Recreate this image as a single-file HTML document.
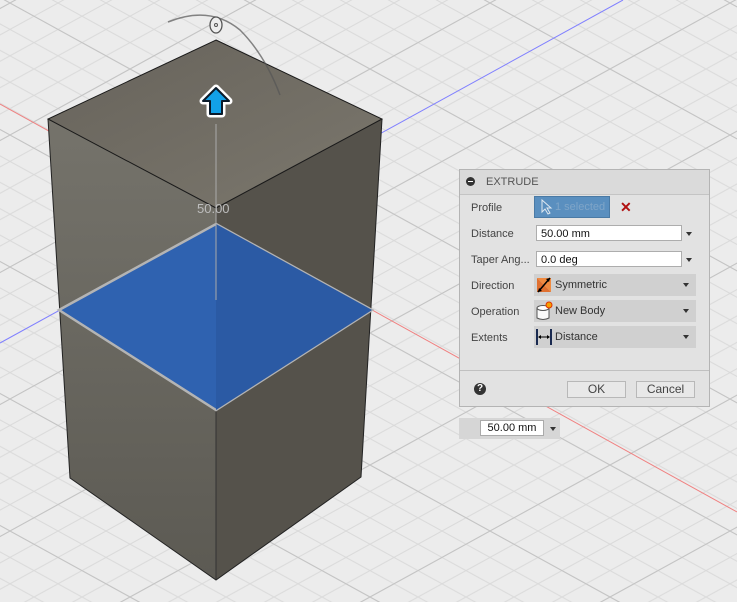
<!DOCTYPE html>
<html><head><meta charset="utf-8"><style>
html,body{margin:0;padding:0;width:737px;height:602px;overflow:hidden;background:#ececec;font-family:"Liberation Sans",sans-serif;}
svg.bg{position:absolute;left:0;top:0}
.panel{position:absolute;left:459px;top:169px;width:249px;height:236px;background:#e2e2e2;border:1px solid #b4b4b4;font-size:11px;color:#333}
.hdr{height:24px;border-bottom:1px solid #c4c4c4;background:#dadada;position:relative}
.hdr .min{position:absolute;left:6px;top:7px;width:9px;height:9px;border-radius:50%;background:#333}
.hdr .min:after{content:"";position:absolute;left:2px;top:4px;width:5px;height:1px;background:#fff}
.hdr span{position:absolute;left:26px;top:6px;color:#555;font-size:11px}
.lbl{position:absolute;left:11px;font-size:11px;color:#444}
.inp{position:absolute;left:76px;width:146px;height:16px;background:#fff;border:1px solid #adadad;font-size:11px;line-height:16px;padding-left:4px;box-sizing:border-box;color:#111}
.arr{position:absolute;width:0;height:0;border-left:3px solid transparent;border-right:3px solid transparent;border-top:4px solid #333}
.dd{position:absolute;left:74px;width:162px;height:22px;background:#d0d0d0;font-size:11px;line-height:22px;color:#333}
.dd span{position:absolute;left:21px;top:0}
.dd .arr{left:149px;top:9px}
.foot{position:absolute;left:0;top:200px;width:249px;height:1px;background:#c0c0c0}
.btn{position:absolute;top:211px;height:15px;border:1px solid #b8b8b8;background:#e8e8e8;font-size:12px;text-align:center;line-height:15px;color:#444}
</style></head><body>
<svg class="bg" width="737" height="602" viewBox="0 0 737 602">
<defs>
<pattern id="g" width="48" height="26.4" patternUnits="userSpaceOnUse" x="10" y="3">
<path d="M0 0L48 26.4M0 26.4L48 0" stroke="#dadada" stroke-width="1" fill="none"/>
</pattern>
<pattern id="g2" width="240" height="132" patternUnits="userSpaceOnUse" x="10" y="3">
<path d="M0 0L240 132M0 132L240 0" stroke="#c4c4c4" stroke-width="1" fill="none"/>
</pattern>
<linearGradient id="top" x1="0" y1="0" x2="1" y2="1"><stop offset="0" stop-color="#67635b"/><stop offset="1" stop-color="#7b776d"/></linearGradient>
<linearGradient id="lf" x1="0" y1="0" x2="0" y2="1"><stop offset="0" stop-color="#75736b"/><stop offset="1" stop-color="#5c5a53"/></linearGradient>
</defs>
<rect width="737" height="602" fill="#ececec"/>
<rect width="737" height="602" fill="url(#g)"/>
<rect width="737" height="602" fill="url(#g2)"/>
<line x1="0" y1="104" x2="737" y2="512" stroke="#f08080" stroke-width="1"/>
<line x1="0" y1="343" x2="623" y2="0" stroke="#8080ff" stroke-width="1"/>
<polygon points="48,119 216,208 216,580 70,478" fill="url(#lf)"/>
<polygon points="216,208 382,119 361,477 216,580" fill="#55524b"/>
<polygon points="216,40 382,119 216,208 48,119" fill="url(#top)" stroke="#1a1a1a" stroke-width="1"/>
<polyline points="48,119 70,478 216,580 361,477 382,119" fill="none" stroke="#222" stroke-width="1"/>
<line x1="216" y1="410" x2="216" y2="580" stroke="#333" stroke-width="1"/>
<polygon points="216,224 372,310 216,410 59,310" fill="#2f62b0" stroke="#b4b4b4" stroke-width="2.5"/>
<polygon points="216,224 372,310 216,410" fill="#2b5aa4"/>
<line x1="216" y1="124" x2="216" y2="300" stroke="#aaa" stroke-width="1"/>
<text x="197" y="213" font-size="13" fill="#bdbdbd" font-family="Liberation Sans">50.00</text>
<path d="M168 22 Q210 5 240 30 Q265 55 280 95" stroke="#555" stroke-width="1.5" fill="none" opacity="0.7"/>
<ellipse cx="216" cy="25" rx="6" ry="8" fill="#eee" stroke="#555" stroke-width="1.3"/>
<circle cx="216" cy="25" r="1.5" fill="none" stroke="#555"/>
<path d="M216 88 L229 101 L222 101 L222 114 L210 114 L210 101 L203 101 Z" fill="none" stroke="#fff" stroke-width="7" stroke-linejoin="round"/>
<path d="M216 88 L229 101 L222 101 L222 114 L210 114 L210 101 L203 101 Z" fill="#12a1e8" stroke="#0a1a2a" stroke-width="2" stroke-linejoin="round"/>
</svg>

<div class="panel">
<div class="hdr"><div class="min"></div><span>EXTRUDE</span></div>
<div class="lbl" style="top:32px">Profile</div>
<div style="position:absolute;left:74px;top:26px;width:76px;height:22px;background:#5a8fbf;border:1px solid #4a7aa5;box-sizing:border-box;color:#7fa5c8;font-size:11px;line-height:20px">
<svg width="14" height="16" style="position:absolute;left:5px;top:2px"><path d="M2 1 L2 13 L5 10 L8 15 L10 14 L7 9 L11 9 Z" fill="#5a8fbf" stroke="#dfe8f0" stroke-width="1"/></svg>
<span style="position:absolute;left:20px;top:0">1 selected</span></div>
<div style="position:absolute;left:160px;top:29px;color:#b01010;font-size:14px;font-weight:bold">✕</div>
<div class="lbl" style="top:58px">Distance</div>
<div class="inp" style="top:55px">50.00 mm</div><div class="arr" style="left:226px;top:62px"></div>
<div class="lbl" style="top:84px">Taper Ang...</div>
<div class="inp" style="top:81px">0.0 deg</div><div class="arr" style="left:226px;top:88px"></div>
<div class="lbl" style="top:110px">Direction</div>
<div class="dd" style="top:104px"><svg width="18" height="20" style="position:absolute;left:1px;top:1px"><polygon points="2,3 16,17 16,3" fill="#f08a40"/><polygon points="2,3 2,17 16,17" fill="#e07030"/><line x1="3" y1="17" x2="15" y2="3" stroke="#000" stroke-width="1.5"/><path d="M15 3 L11 4 L14 7Z M3 17 L7 16 L4 13Z" fill="#000"/></svg><span>Symmetric</span><div class="arr"></div></div>
<div class="lbl" style="top:136px">Operation</div>
<div class="dd" style="top:130px"><svg width="18" height="20" style="position:absolute;left:1px;top:1px"><path d="M2 7 L2 17 Q8 20 14 17 L14 7" fill="#fafafa" stroke="#555"/><ellipse cx="8" cy="7" rx="6" ry="2.5" fill="#fff" stroke="#555"/><circle cx="14" cy="4" r="3" fill="#f5a000" stroke="#e03000"/></svg><span>New Body</span><div class="arr"></div></div>
<div class="lbl" style="top:162px">Extents</div>
<div class="dd" style="top:156px"><svg width="18" height="20" style="position:absolute;left:1px;top:1px"><line x1="2" y1="2" x2="2" y2="18" stroke="#1a2a50" stroke-width="2"/><line x1="16" y1="2" x2="16" y2="18" stroke="#1a2a50" stroke-width="2"/><line x1="4" y1="10" x2="14" y2="10" stroke="#000"/><path d="M3 10 L6 8 L6 12Z M15 10 L12 8 L12 12Z" fill="#000"/></svg><span>Distance</span><div class="arr"></div></div>
<div class="foot"></div>
<div style="position:absolute;left:14px;top:213px;width:12px;height:12px;border-radius:50%;background:#333;color:#fff;font-size:10px;font-weight:bold;text-align:center;line-height:12px">?</div>
<div class="btn" style="left:107px;width:57px">OK</div>
<div class="btn" style="left:176px;width:57px">Cancel</div>
</div>

<div style="position:absolute;left:459px;top:418px;width:101px;height:21px;background:#d6d6d6">
<div style="position:absolute;left:21px;top:2px;width:64px;height:16px;background:#fff;border:1px solid #aaa;box-sizing:border-box;font-size:11px;text-align:center;line-height:14px;color:#111">50.00 mm</div>
<div class="arr" style="left:91px;top:9px"></div>
</div>
</body></html>
